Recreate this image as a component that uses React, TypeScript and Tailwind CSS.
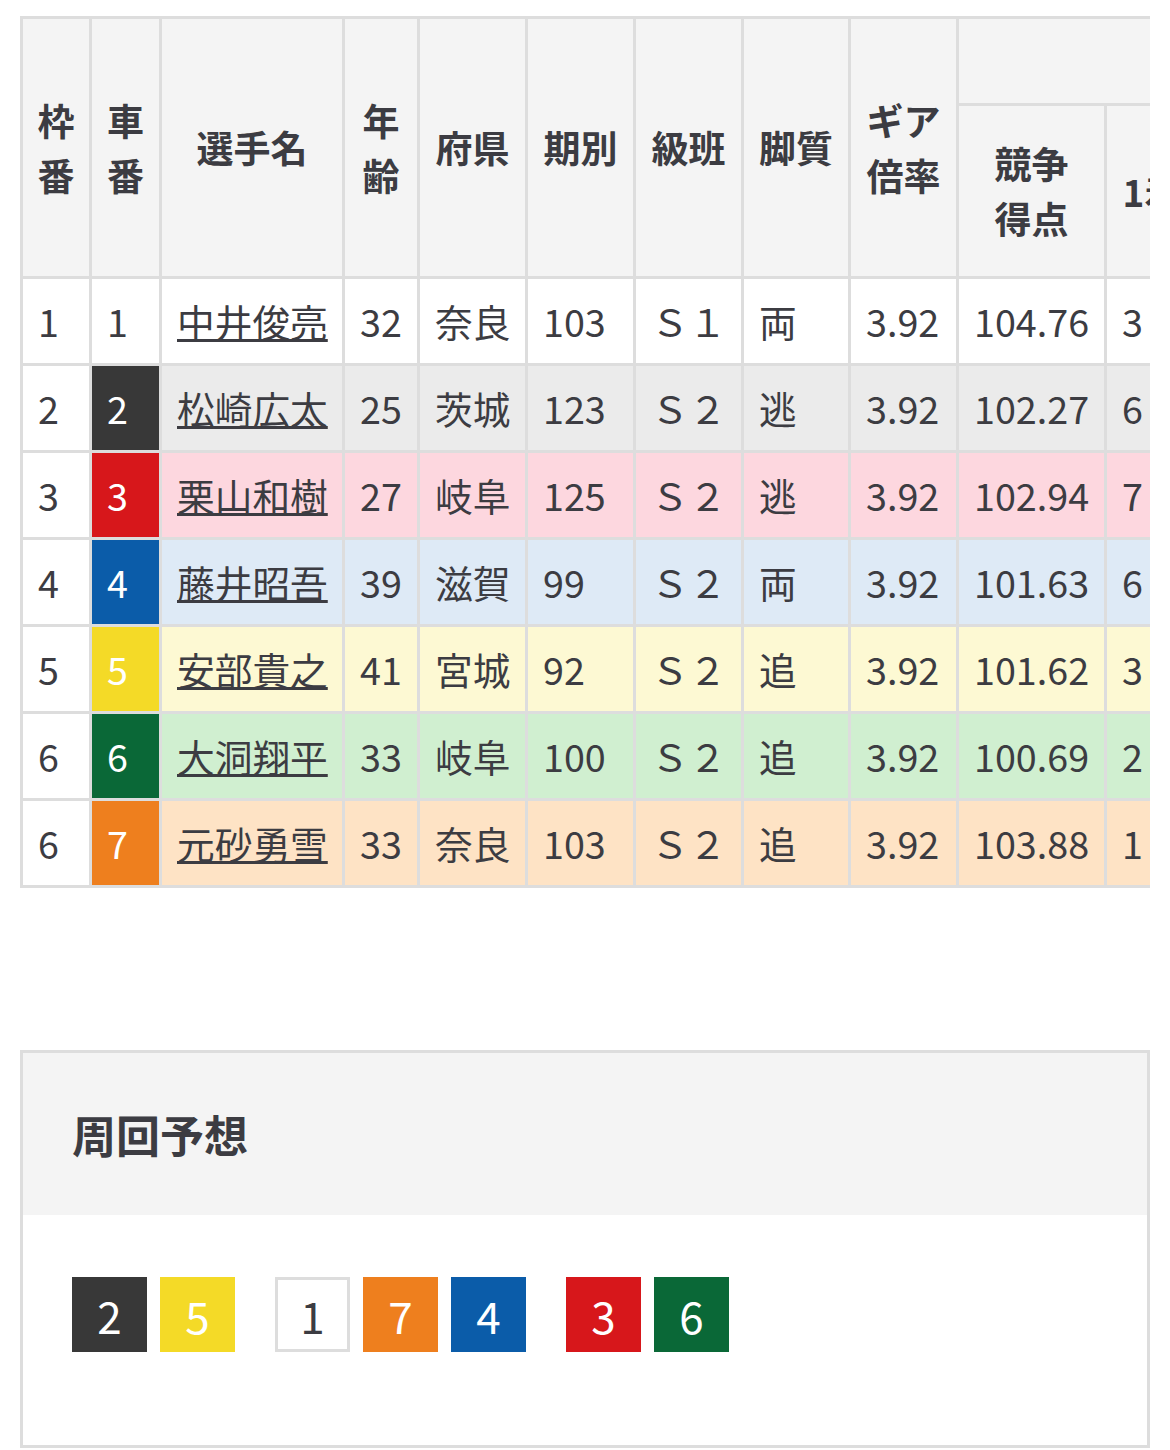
import React from "react";

type Row = {
  waku: string;
  sha: string;
  name: string;
  age: string;
  pref: string;
  ki: string;
  cls: string;
  kyaku: string;
  gear: string;
  score: string;
  rest: string[];
  bg: string;
  chip: string;
};

const rows: Row[] = [
  { waku: "1", sha: "1", name: "中井俊亮", age: "32", pref: "奈良", ki: "103", cls: "Ｓ１", kyaku: "両", gear: "3.92", score: "104.76", rest: ["3", "2", "1", "6", "25.0", "41.6", "50.0"], bg: "bg-white", chip: "bg-white text-[#3c3c42]" },
  { waku: "2", sha: "2", name: "松崎広太", age: "25", pref: "茨城", ki: "123", cls: "Ｓ２", kyaku: "逃", gear: "3.92", score: "102.27", rest: ["6", "3", "2", "5", "37.5", "56.2", "68.7"], bg: "bg-[#ebebeb]", chip: "bg-[#383838] text-white" },
  { waku: "3", sha: "3", name: "栗山和樹", age: "27", pref: "岐阜", ki: "125", cls: "Ｓ２", kyaku: "逃", gear: "3.92", score: "102.94", rest: ["7", "2", "3", "4", "43.7", "56.2", "75.0"], bg: "bg-[#fdd7df]", chip: "bg-[#d7171b] text-white" },
  { waku: "4", sha: "4", name: "藤井昭吾", age: "39", pref: "滋賀", ki: "99", cls: "Ｓ２", kyaku: "両", gear: "3.92", score: "101.63", rest: ["6", "1", "2", "7", "37.5", "43.7", "56.2"], bg: "bg-[#deeaf6]", chip: "bg-[#0b5ca9] text-white" },
  { waku: "5", sha: "5", name: "安部貴之", age: "41", pref: "宮城", ki: "92", cls: "Ｓ２", kyaku: "追", gear: "3.92", score: "101.62", rest: ["3", "4", "2", "7", "18.7", "43.7", "56.2"], bg: "bg-[#fdf9d3]", chip: "bg-[#f4da27] text-white" },
  { waku: "6", sha: "6", name: "大洞翔平", age: "33", pref: "岐阜", ki: "100", cls: "Ｓ２", kyaku: "追", gear: "3.92", score: "100.69", rest: ["2", "3", "4", "7", "12.5", "31.2", "56.2"], bg: "bg-[#d0efd0]", chip: "bg-[#0a6837] text-white" },
  { waku: "6", sha: "7", name: "元砂勇雪", age: "33", pref: "奈良", ki: "103", cls: "Ｓ２", kyaku: "追", gear: "3.92", score: "103.88", rest: ["1", "5", "3", "7", "6.2", "37.5", "56.2"], bg: "bg-[#fee3c5]", chip: "bg-[#ee7f1e] text-white" },
];

const subHeads = ["1着", "2着", "3着", "着外", "勝率", "2連対率", "3連対率"];

const lapGroups = [
  [
    { n: "2", c: "bg-[#383838] text-white" },
    { n: "5", c: "bg-[#f4da27] text-white" },
  ],
  [
    { n: "1", c: "bg-white text-[#3c3c42] border-[3px] border-[#dddddd]" },
    { n: "7", c: "bg-[#ee7f1e] text-white" },
    { n: "4", c: "bg-[#0b5ca9] text-white" },
  ],
  [
    { n: "3", c: "bg-[#d7171b] text-white" },
    { n: "6", c: "bg-[#0a6837] text-white" },
  ],
];

const Th = ({ children, className = "" }: { children: React.ReactNode; className?: string }) => (
  <div className={`bg-[#f4f4f4] flex items-center justify-center text-center font-bold text-[37px] leading-[55px] ${className}`}>
    {children}
  </div>
);

const Td = ({ children, className = "" }: { children: React.ReactNode; className?: string }) => (
  <div className={`flex items-center pl-[15px] pt-[1px] whitespace-nowrap ${className}`}>{children}</div>
);

export default function App() {
  return (
    <div className="bg-white px-5 pt-4 pb-[2px] text-[#3c3c42] font-['Noto_Sans_CJK_JP','Noto_Sans',sans-serif]">
      {/* entry table */}
      <div className="overflow-hidden">
        <div className="grid w-max gap-[3px] border-[3px] border-[#dddddd] bg-[#dddddd] text-[37.7px] grid-cols-[66px_67px_180px_72px_105px_105px_105px_104px_105px_145px_90px_90px_90px_90px_110px_150px_150px] grid-rows-[84px_170px_repeat(7,84px)]">
          <Th className="row-span-2">枠<br />番</Th>
          <Th className="row-span-2">車<br />番</Th>
          <Th className="row-span-2">選手名</Th>
          <Th className="row-span-2">年<br />齢</Th>
          <Th className="row-span-2">府県</Th>
          <Th className="row-span-2">期別</Th>
          <Th className="row-span-2">級班</Th>
          <Th className="row-span-2">脚質</Th>
          <Th className="row-span-2">ギア<br />倍率</Th>
          <Th className="col-span-8">直近4ヶ月成績</Th>
          <Th>競争<br />得点</Th>
          {subHeads.map((h) => (
            <Th key={h}>{h}</Th>
          ))}

          {rows.map((r, i) => (
            <React.Fragment key={i}>
              <Td className="bg-white">{r.waku}</Td>
              <Td className={r.chip}>{r.sha}</Td>
              <Td className={r.bg}>
                <a href="#" className="underline decoration-[3px]">{r.name}</a>
              </Td>
              <Td className={r.bg}>{r.age}</Td>
              <Td className={r.bg}>{r.pref}</Td>
              <Td className={r.bg}>{r.ki}</Td>
              <Td className={r.bg}>{r.cls}</Td>
              <Td className={r.bg}>{r.kyaku}</Td>
              <Td className={r.bg}>{r.gear}</Td>
              <Td className={r.bg}>{r.score}</Td>
              {r.rest.map((v, j) => (
                <Td key={j} className={r.bg}>{v}</Td>
              ))}
            </React.Fragment>
          ))}
        </div>
      </div>

      {/* lap prediction */}
      <div className="mt-[162px] border-[3px] border-[#dddddd]">
        <div className="bg-[#f4f4f4] h-[162px] flex items-center px-[49px]">
          <h2 className="text-[44px] font-bold">周回予想</h2>
        </div>
        <div className="flex gap-[40px] px-[49px] pt-[62px] pb-[93px]">
          {lapGroups.map((g, gi) => (
            <div key={gi} className="flex gap-[13px]">
              {g.map((c) => (
                <span key={c.n} className={`w-[75px] h-[75px] flex items-center justify-center text-[44px] ${c.c}`}>
                  {c.n}
                </span>
              ))}
            </div>
          ))}
        </div>
      </div>
    </div>
  );
}
